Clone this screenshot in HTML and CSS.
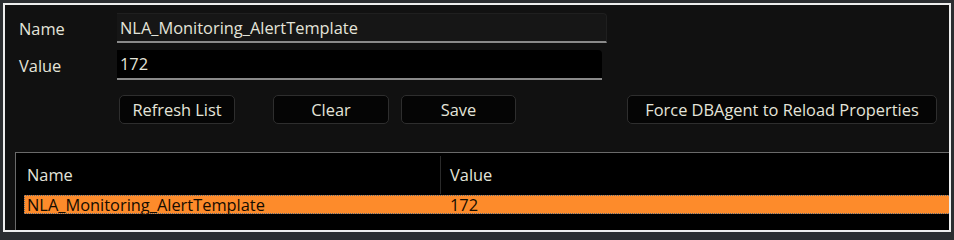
FILE: index.html
```html
<!DOCTYPE html>
<html>
<head>
<meta charset="utf-8">
<link rel="stylesheet" href="styles.css">
</head>
<body>
<div class="frame">
  <div class="form">
    <div class="row">
      <span class="label">Name</span>
      <div class="field field-name">NLA_Monitoring_AlertTemplate</div>
    </div>
    <div class="row row-value">
      <span class="label">Value</span>
      <div class="field field-value">172</div>
    </div>
    <div class="buttons">
      <button class="btn btn-refresh">Refresh List</button>
      <button class="btn btn-clear">Clear</button>
      <button class="btn btn-save">Save</button>
      <button class="btn btn-force">Force DBAgent to Reload Properties</button>
    </div>
  </div>
  <div class="table">
    <div class="thead">
      <div class="th th-name">Name</div>
      <div class="th th-value">Value</div>
    </div>
    <div class="tr selected">
      <div class="td td-name">NLA_Monitoring_AlertTemplate</div>
      <div class="td td-value">172</div>
    </div>
  </div>
</div>
</body>
</html>
```
FILE: styles.css
```css
* { box-sizing: border-box; }
html, body {
  margin: 0;
  padding: 0;
  width: 954px;
  height: 235px;
  background: #2b2e31;
  overflow: hidden;
}
body {
  padding: 3px;
  font-family: "Open Sans", "DejaVu Sans", sans-serif;
  font-size: 16.4px;
  color: #e4e4da;
}
.frame {
  width: 948px;
  height: 229px;
  border: 2px solid #eeeeee;
  background: #111111;
  overflow: hidden;
  display: flex;
  flex-direction: column;
}
.form {
  padding: 8px 0 0 14px;
}
.row {
  display: flex;
  align-items: center;
  height: 30px;
}
.row-value { margin-top: 7px; }
.label {
  width: 98px;
  line-height: 30px;
  padding-top: 2px;
}
.field {
  height: 30px;
  line-height: 28px;
  padding-left: 3px;
  border-bottom: 2px solid #8a8a8a;
  border-radius: 0 4px 0 0;
}
.field-name {
  width: 490px;
  background: #161616;
  border-top: 1px solid #1f1f1f;
  border-right: 1px solid #1f1f1f;
}
.field-value {
  width: 485px;
  background: #000000;
}
.buttons {
  display: flex;
  margin-top: 15px;
  margin-left: 100px;
  height: 29px;
}
.btn {
  height: 29px;
  line-height: 27px;
  background: #050505;
  border: 1px solid #2e2e2e;
  border-radius: 5px;
  color: #e4e4da;
  font-family: inherit;
  font-size: 16.4px;
  padding: 0;
}
.btn-refresh { width: 116px; }
.btn-clear { width: 116px; margin-left: 38px; }
.btn-save { width: 115px; margin-left: 12px; }
.btn-force { width: 310px; margin-left: 111px; }
.table {
  margin-top: 28px;
  margin-left: 10px;
  width: 960px;
  flex: 1;
  background: #000000;
  border-top: 1px solid #6a6a6a;
  border-left: 1px solid #6a6a6a;
}
.thead {
  display: flex;
  height: 41px;
}
.th {
  padding: 10px 0 0 11px;
}
.th-name {
  width: 425px;
  border-right: 1px solid #2a2a2a;
  margin-top: 3px;
  padding-top: 7px;
}
.th-value { padding-left: 9px; }
.tr {
  display: flex;
  height: 19px;
  line-height: 18px;
  margin-left: 8px;
  margin-top: 1px;
}
.selected {
  background: #fd8b2b;
  color: #140c00;
  border: 1px dotted #5a6a7a;
}
.td-name { width: 425px; padding-left: 2px; }
.td-value { padding-left: 0; }
```
